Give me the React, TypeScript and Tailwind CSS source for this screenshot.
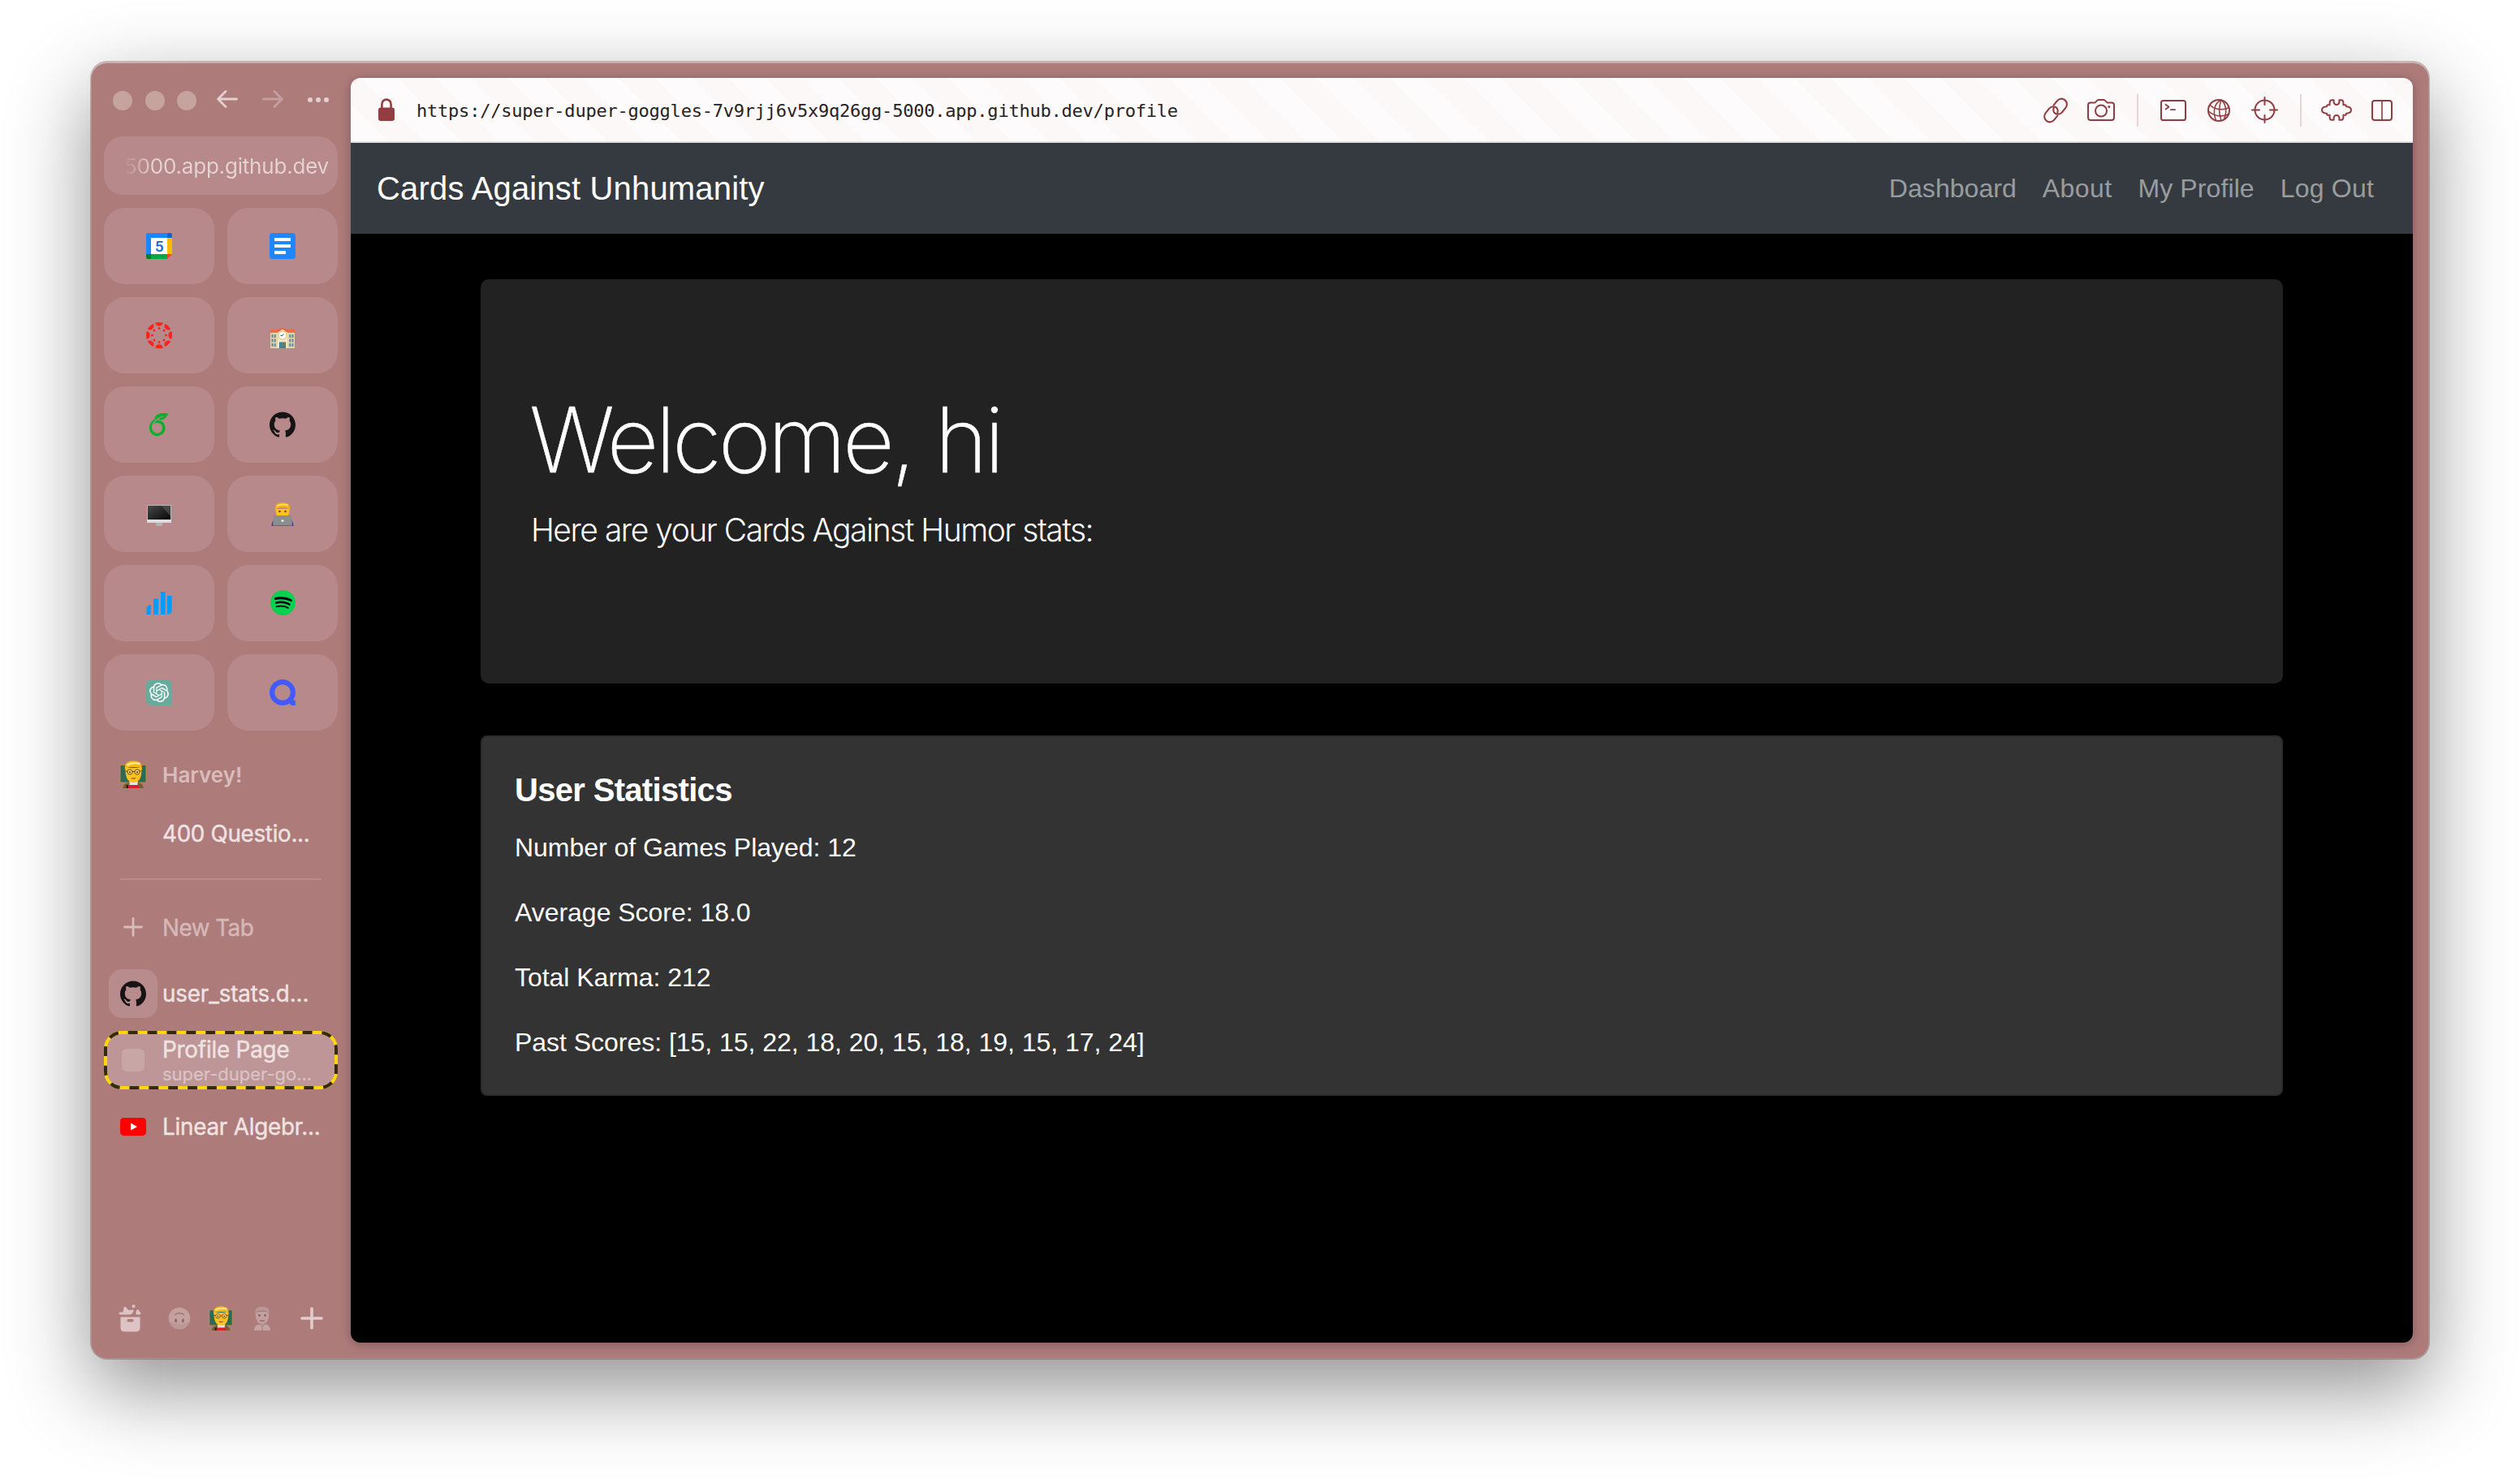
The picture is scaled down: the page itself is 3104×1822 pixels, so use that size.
import React from 'react';
import type { ReactNode } from 'react';
import { SiGithub, SiOpenai, SiOverleaf, SiSpotify } from 'react-icons/si';

/* ---------- Sidebar icons ---------- */

function CalendarIcon() {
  return (
    <div className="grid size-8 place-items-center">
      <svg className="col-start-1 row-start-1 size-8" viewBox="0 0 32 32">
        <path d="M2 0H26V6H6V26H0V2Q0 0 2 0Z" fill="#1e86fc" />
        <path d="M26 0H30Q32 0 32 2V6H26Z" fill="#0b67d6" />
        <path d="M26 6H32V26H26Z" fill="#fbba00" />
        <path d="M6 26H26V32H6Z" fill="#00a846" />
        <path d="M0 26H6V32H2Q0 32 0 30Z" fill="#00802d" />
        <path d="M26 26H32L26 32Z" fill="#fb3b2f" />
        <path d="M6 6H26V26H6Z" fill="#fff" />
      </svg>
      <span className="z-10 col-start-1 row-start-1 font-['Roboto'] text-[19px] leading-none font-medium text-[#1268d8]">5</span>
    </div>
  );
}

function DocsIcon() {
  return (
    <svg className="size-8" viewBox="0 0 32 32">
      <rect width="32" height="32" rx="3.5" fill="#2186fb" />
      <path d="M6 6H26V10H6ZM6 14H26V18H6ZM6 22H20V26H6Z" fill="#fff" />
    </svg>
  );
}

function CanvasIcon() {
  const turns = [0, 45, 90, 135, 180, 225, 270, 315];
  return (
    <svg className="size-8" viewBox="0 0 32 32" fill="#fb231c">
      {turns.map((a) => (
        <g key={a} transform={`rotate(${a} 16 16)`}>
          <path d="M11.2 0.6Q16 -0.6 20.8 0.6Q20 4.7 16 4.7Q12 4.7 11.2 0.6Z" />
          <circle cx="16" cy="7.5" r="1.5" />
        </g>
      ))}
    </svg>
  );
}

function SchoolIcon() {
  return (
    <svg className="mt-1.5 h-[27px] w-8" viewBox="0 0 32 27">
      <path d="M1 6H31V26H1Z" fill="#e3d6ac" />
      <path d="M0.5 2.8H31.5V6.8H0.5Z" fill="#ee6a48" />
      <path d="M10 5L16 1L22 5V26H10Z" fill="#f1e7c6" />
      <path d="M9 5.2L16 0.2L23 5.2L22 6.4L16 2.4L10 6.4Z" fill="#e85c3b" />
      <path d="M2.5 9h2v4h-2zM5.7 9h2v4h-2zM2.5 14.5h2v4h-2zM5.7 14.5h2v4h-2zM2.5 20h2v4h-2zM5.7 20h2v4h-2zM24.3 9h2v4h-2zM27.5 9h2v4h-2zM24.3 14.5h2v4h-2zM27.5 14.5h2v4h-2zM24.3 20h2v4h-2zM27.5 20h2v4h-2z" fill="#6389a0" />
      <circle cx="16" cy="10" r="5" fill="#fff" stroke="#d9bf55" strokeWidth="1" />
      <path d="M17.5 8.5L16 10.4H13.5" stroke="#444" strokeWidth="1" fill="none" />
      <path d="M12 18.5H20V26H12Z" fill="#2f6d8d" />
      <path d="M13.8 18.5v7.5M16 18.5v7.5M18.2 18.5v7.5" stroke="#b9a768" strokeWidth="0.7" />
    </svg>
  );
}

function MonitorIcon() {
  return (
    <svg className="mt-1 h-[27px] w-[30px]" viewBox="0 0 30 27">
      <defs>
        <linearGradient id="screen" x1="0" y1="0" x2="1" y2="1">
          <stop offset="0" stopColor="#4a4a4a" />
          <stop offset="1" stopColor="#050505" />
        </linearGradient>
      </defs>
      <path d="M0 0H30V18H0Z" fill="#b9b9b9" />
      <path d="M1 1H29V18H1Z" fill="url(#screen)" />
      <path d="M18 1H29V14Z" fill="#5b5b5b" opacity="0.6" />
      <path d="M0 18H30V21.5Q30 22 29.5 22H0.5Q0 22 0 21.5Z" fill="#dcdcde" />
      <path d="M11 22H19V26H11Z" fill="#b3b0b2" />
    </svg>
  );
}

function TechnologistIcon() {
  return (
    <svg className="h-[29px] w-7" viewBox="0 0 28 29">
      <path d="M0.5 29Q1 22 5 20H23Q27 22 27.5 29Z" fill="#2c3aa5" />
      <path d="M5.5 8Q5.5 20 14 20Q22.5 20 22.5 8Z" fill="#fdc31c" />
      <path d="M5 10Q3.5 0 14 0Q24.5 0 23 10Q21.5 6 14 6.4Q6.5 6 5 10Z" fill="#f5b40e" />
      <path d="M7 4.5Q12 1.2 21 3.5" stroke="#ffe072" strokeWidth="1.8" fill="none" />
      <circle cx="10.5" cy="11" r="1.2" fill="#5b3a1c" />
      <circle cx="17.5" cy="11" r="1.2" fill="#5b3a1c" />
      <path d="M3 16H25L26 28.6H2Z" fill="#8b8d8f" />
      <circle cx="14" cy="22.5" r="1.5" fill="#eee" />
    </svg>
  );
}

function BarsIcon() {
  return (
    <svg className="h-7 w-8" viewBox="0 0 32 28" fill="#069bff">
      <path d="M0.5 28V20Q1 16.5 6 16V28ZM9 8.5H15V28H9ZM18 0H23.5V28H18ZM26 5H31.7V23Q31.5 27.5 26 28Z" />
    </svg>
  );
}

function SpotifyIcon() {
  return (
    <div className="mb-0.5 grid size-8 place-items-center">
      <div className="col-start-1 row-start-1 size-7 rounded-full bg-black" />
      <SiSpotify className="z-10 col-start-1 row-start-1 size-[31px] text-[#0ad04f]" />
    </div>
  );
}

function ChatIcon() {
  return (
    <div className="grid size-8 place-items-center rounded-[7px] rounded-br-none bg-[#67ab9c]">
      <SiOpenai className="size-6 text-white" />
    </div>
  );
}

function QIcon() {
  return (
    <svg className="size-8" viewBox="0 0 32 32">
      <circle cx="16" cy="16" r="12.9" stroke="#425aff" strokeWidth="6.2" fill="none" />
      <path d="M22 27L28.5 25.5H31.8V32H27Z" fill="#425aff" />
    </svg>
  );
}

function TeacherIcon({ className }: { className: string }) {
  return (
    <svg className={className} viewBox="0 0 34 34">
      <path d="M0 4.5H34V28H0Z" fill="#b78453" />
      <path d="M1.5 6H32.5V26.5H1.5Z" fill="#2b6b55" />
      <path d="M4 34Q5 28 12 27H23Q29 28 30 34Z" fill="#75602f" />
      <path d="M12.5 25H22.5V31H12.5Z" fill="#e8e6ea" />
      <path d="M10 30H24V34H10Z" fill="#d8202a" />
      <path d="M8.5 30H11V34H8.5Z" fill="#35161a" />
      <path d="M7.5 9Q7 27 17.5 27Q28 27 27.5 9Z" fill="#fdc120" />
      <path d="M7 12Q5 0.3 17.5 0.3Q29 0.3 27.8 12Q26.5 7.5 17.5 8Q9 7.5 7 12Z" fill="#f6b816" />
      <path d="M9.5 6Q15 1.5 25.5 4" stroke="#ffe88c" strokeWidth="2.4" fill="none" />
      <circle cx="13" cy="14" r="3.1" fill="#fbd862" stroke="#5a3d12" strokeWidth="0.9" />
      <circle cx="22" cy="14" r="3.1" fill="#fbd862" stroke="#5a3d12" strokeWidth="0.9" />
      <path d="M16 13.5H19M7.8 13H10M25 13H27.2" stroke="#5a3d12" strokeWidth="0.9" />
      <circle cx="13" cy="14.3" r="1" fill="#3a2409" />
      <circle cx="22" cy="14.3" r="1" fill="#3a2409" />
      <path d="M15 21.5Q17.5 22.8 20 21.5" stroke="#8a5510" strokeWidth="1.3" fill="none" />
    </svg>
  );
}

function ArchiveIcon() {
  return (
    <svg className="h-[34px] w-7" viewBox="0 0 28 34" fill="#dec3c4">
      <path d="M2.5 15.5H26.5V28.5Q26.5 33.5 21.5 33.5H7.5Q2.5 33.5 2.5 28.5ZM12 18Q10.5 18 10.5 19.7T12 21.5H17Q18.5 21.5 18.5 19.7T17 18Z" fillRule="evenodd" />
      <path d="M2 12.5Q0 12 0.6 10.4Q1 9.4 3 9.6L5.6 9.4L6.4 4Q7.4 1.4 9.4 3.8L12.4 7L17.5 6.6Q19.4 7 18 9Q16.5 12.5 13.5 12.5Z" />
      <circle cx="18.5" cy="2.2" r="2" />
      <path d="M22.5 6.5Q23.6 5.4 24.6 7L27.4 10.6Q28 12.5 25.8 12.5H22.4Q20.8 12.4 21.2 11Z" />
    </svg>
  );
}

function UpsideDownIcon() {
  return (
    <svg className="size-7" viewBox="0 0 28 28">
      <circle cx="14" cy="14" r="13.3" fill="#c4a09f" />
      <path d="M1.5 18A13.3 13.3 0 0 0 26.5 18Q14 25 1.5 18Z" fill="#b08a8a" opacity="0.4" />
      <path d="M8.5 9.5Q14 5.8 19.5 9.5" stroke="#967070" strokeWidth="1.3" fill="none" strokeLinecap="round" />
      <ellipse cx="9.6" cy="17" rx="1.4" ry="2.4" fill="#8d6565" />
      <ellipse cx="18.4" cy="17" rx="1.4" ry="2.4" fill="#8d6565" />
    </svg>
  );
}

function ManIcon() {
  return (
    <svg className="h-[30px] w-[22px]" viewBox="0 0 22 30">
      <path d="M1 30Q1 23.5 7 22.5H15Q21 23.5 21 30Z" fill="#c5a2a2" />
      <path d="M7.5 22L11 25L14.5 22M11 25V30" stroke="#a57f80" strokeWidth="1" fill="none" />
      <path d="M2.5 7Q2.5 22 11 22Q19.5 22 19.5 7Z" fill="#c3a0a0" />
      <path d="M2 10Q0.5 0.3 11 0.3Q21.5 0.3 20 10Q18.5 5.5 11 6Q3.5 5.5 2 10Z" fill="#bd9797" stroke="#a47e7f" strokeWidth="0.8" />
      <circle cx="7.4" cy="11.5" r="1.3" fill="#7b5556" />
      <circle cx="14.6" cy="11.5" r="1.3" fill="#7b5556" />
      <path d="M8 17.5Q11 19.3 14 17.5" stroke="#8d6566" strokeWidth="1.2" fill="none" />
    </svg>
  );
}

function YouTubeIcon() {
  return (
    <svg className="h-[22px] w-8" viewBox="0 0 32 22">
      <rect width="32" height="22" rx="4.5" fill="#fd0000" />
      <path d="M13 6.5L21 11L13 15.5Z" fill="#fff" />
    </svg>
  );
}

/* ---------- Toolbar icons ---------- */

function ToolIcon({ className, viewBox, children }: { className: string; viewBox: string; children: ReactNode }) {
  return (
    <div className="flex w-14 justify-center">
      <svg className={className} viewBox={viewBox} fill="none" stroke="#923d41" strokeWidth="2" strokeLinecap="round" strokeLinejoin="round">
        {children}
      </svg>
    </div>
  );
}

/* ---------- Sidebar ---------- */

const pinned: ReactNode[] = [
  <CalendarIcon />,
  <DocsIcon />,
  <CanvasIcon />,
  <SchoolIcon />,
  <SiOverleaf className="size-7 text-[#0cae2c]" />,
  <SiGithub className="size-8 text-[#181416]" />,
  <MonitorIcon />,
  <TechnologistIcon />,
  <BarsIcon />,
  <SpotifyIcon />,
  <ChatIcon />,
  <QIcon />,
];

function Row({ icon, children }: { icon?: ReactNode; children: ReactNode }) {
  return (
    <div className="flex h-[72px] items-center">
      <div className="flex w-[72px] justify-center">{icon}</div>
      {children}
    </div>
  );
}

function Sidebar() {
  return (
    <aside className="flex w-[320px] shrink-0 flex-col px-4 font-['Inter',sans-serif] text-[27.8px] tracking-[-0.32px] text-[#f0e3e3]">
      <div className="flex h-[92px] items-center pl-[11px]">
        <div className="mt-1 flex gap-[15.5px]">
          <span className="size-6 rounded-full bg-[#c6a39f]" />
          <span className="size-6 rounded-full bg-[#c6a39f]" />
          <span className="size-6 rounded-full bg-[#c6a39f]" />
        </div>
        <svg className="ml-[25px] h-6 w-[26px]" viewBox="0 0 26 24" fill="none" stroke="#e5cfcf" strokeWidth="2.8" strokeLinecap="round" strokeLinejoin="round">
          <path d="M24.5 12H2M11 2.5L1.6 12L11 21.5" />
        </svg>
        <svg className="ml-[30px] h-6 w-[26px]" viewBox="0 0 26 24" fill="none" stroke="#c59f9f" strokeWidth="2.8" strokeLinecap="round" strokeLinejoin="round">
          <path d="M1.5 12H24M15 2.5L24.4 12L15 21.5" />
        </svg>
        <div className="mt-0.5 ml-[30px] flex gap-[4px]">
          <span className="size-1.5 rounded-full bg-[#e5cfcf]" />
          <span className="size-1.5 rounded-full bg-[#e5cfcf]" />
          <span className="size-1.5 rounded-full bg-[#e5cfcf]" />
        </div>
      </div>

      <div className="flex h-[72px] items-center justify-end rounded-[24px] bg-[#b7898a] pr-[11px]">
        <span className="bg-linear-to-r from-transparent to-[#e6d3d3] to-[14%] bg-clip-text text-[26px] font-normal tracking-[-0.2px] text-transparent">
          5000.app.github.dev
        </span>
      </div>

      <div className="mt-4 grid grid-cols-2 gap-4">
        {pinned.map((icon, i) => (
          <div key={i} className="flex h-[94px] items-center justify-center rounded-[26px] bg-[#b7898a]">
            {icon}
          </div>
        ))}
      </div>

      <div className="mt-[18px] mb-px">
        <Row icon={<TeacherIcon className="size-[34px]" />}>
          <span className="text-[26px] font-semibold tracking-normal text-[#d9bcbc]">Harvey!</span>
        </Row>
        <Row>
          <span className="pt-[3px] [-webkit-text-stroke:0.4px]">400 Questio...</span>
        </Row>
      </div>

      <div className="mx-5 mt-[19px] mb-[22px] h-0.5 bg-[#ba8c8c]" />

      <div className="flex flex-col gap-2.5">
        <Row
          icon={
            <svg className="size-6" viewBox="0 0 24 24" stroke="#d9bcbc" strokeWidth="2.8" strokeLinecap="round">
              <path d="M12 1.5V22.5M1.5 12H22.5" />
            </svg>
          }
        >
          <span className="pt-[3px] tracking-[-0.5px] text-[#d6b8b8] [-webkit-text-stroke:0.4px]">New Tab</span>
        </Row>
        <Row
          icon={
            <div className="flex size-[60px] items-center justify-center rounded-[16px] bg-[#b88b8c]">
              <SiGithub className="size-8 text-[#181416]" />
            </div>
          }
        >
          <span className="pt-[2px] tracking-[-0.15px] [-webkit-text-stroke:0.4px]">user_stats.d...</span>
        </Row>
        <div className="relative rounded-[22px] bg-[#be9697]">
          <Row icon={<div className="size-7 rounded-[6px] bg-[#c7a6a5]" />}>
            <div className="flex flex-col pt-0.5">
              <span className="leading-[32px] tracking-[-0.2px] [-webkit-text-stroke:0.4px]">Profile Page</span>
              <span className="text-[22px] leading-[28px] tracking-[-0.02px] text-[#dcc3c4] [-webkit-text-stroke:0.2px]">super-duper-go...</span>
            </div>
          </Row>
          <svg className="absolute inset-0 h-[72px] w-[288px]" viewBox="0 0 288 72" fill="none" strokeWidth="4">
            <rect x="2" y="2" width="284" height="68" rx="20" stroke="#ffd60a" />
            <rect x="2" y="2" width="284" height="68" rx="20" stroke="#332b0a" pathLength="672" strokeDasharray="12 12" strokeDashoffset="-7.7" />
          </svg>
        </div>
        <Row icon={<YouTubeIcon />}>
          <span className="pt-[2px] tracking-[-0.22px] [-webkit-text-stroke:0.4px]">Linear Algebr...</span>
        </Row>
      </div>

      <div className="mt-auto mb-[30px] flex h-10 items-center justify-between">
        <div className="flex w-16 justify-center">
          <ArchiveIcon />
        </div>
        <div className="flex">
          <div className="flex w-[51px] items-center justify-center">
            <UpsideDownIcon />
          </div>
          <div className="flex w-[51px] items-center justify-center">
            <TeacherIcon className="size-[30px]" />
          </div>
          <div className="flex w-[51px] items-center justify-center">
            <ManIcon />
          </div>
        </div>
        <div className="flex w-16 justify-center">
          <svg className="size-7" viewBox="0 0 28 28" stroke="#e3cbcc" strokeWidth="3.6" strokeLinecap="round">
            <path d="M14 2V26M2 14H26" />
          </svg>
        </div>
      </div>
    </aside>
  );
}

/* ---------- Browser toolbar ---------- */

function Toolbar() {
  return (
    <div className="flex h-20 shrink-0 items-center border-b-2 border-[#e2dfe0] bg-[repeating-linear-gradient(45deg,#fdfbfc_0,#fdfbfc_32px,#fcf8f7_32px,#fcf8f7_64px)] pr-[10px] pl-[34px]">
      <svg className="h-7 w-5" viewBox="0 0 20 28">
        <path d="M4.4 13V7.2a5.6 5.6 0 0 1 11.2 0V13" fill="none" stroke="#923d41" strokeWidth="2.6" />
        <rect y="11.5" width="20" height="16.5" rx="3" fill="#923d41" />
      </svg>
      <span className="ml-[27px] pt-[3px] font-['DejaVu_Sans_Mono',monospace] text-[22px] tracking-[-0.22px] whitespace-nowrap text-[#262324]">
        https://super-duper-goggles-7v9rjj6v5x9q26gg-5000.app.github.dev/profile
      </span>
      <div className="ml-auto flex items-center pt-px">
        <ToolIcon className="size-[34px]" viewBox="0 0 24 24">
          <g strokeWidth="1.45">
            <path d="M10.6 9.6a4.6 4.6 0 0 0 0 4.2a4.5 4.5 0 0 0 6.6.6l3.8-3.9a4.7 4.7 0 0 0-6.9-6.6l-3.2 3.3" transform="rotate(-6 12 12)" />
            <path d="M13.4 14.4a4.6 4.6 0 0 0 0-4.2a4.5 4.5 0 0 0-6.6-.6l-3.8 3.9a4.7 4.7 0 0 0 6.9 6.6l3.2-3.3" transform="rotate(-6 12 12)" />
          </g>
        </ToolIcon>
        <ToolIcon className="h-[27px] w-[34px]" viewBox="0 0 34 27">
          <path d="M4 4.4H9.5L12.4 1.6Q13 1 14 1H20Q21 1 21.6 1.6L24.5 4.4H30Q33 4.4 33 7.4V23Q33 26 30 26H4Q1 26 1 23V7.4Q1 4.4 4 4.4Z" />
          <circle cx="17" cy="14.5" r="7" />
          <circle cx="26.8" cy="9.4" r="0.8" fill="#923d41" strokeWidth="1.4" />
        </ToolIcon>
        <div className="mr-[15px] ml-4 h-10 w-0.5 bg-[#e9d5d7]" />
        <ToolIcon className="h-[26px] w-8" viewBox="0 0 32 26">
          <rect x="1" y="1" width="30" height="24" rx="2.6" />
          <path d="M6.5 5.8L10.5 8.8L6.5 11.6M13 12.2H18" strokeWidth="1.8" />
        </ToolIcon>
        <ToolIcon className="size-7" viewBox="0 0 28 28">
          <circle cx="14" cy="14" r="13" />
          <g strokeWidth="1.5">
            <path d="M17 1.2C8 5 6.5 16 10.5 26.5M17 1.2C14 9 14 18 17 26.6M17 1.2C24 7 24 18 20 25.5" />
            <path d="M3 7C8 13 19 14.5 26.5 10.5M1.2 14.8C8 21.5 19 22.5 26.5 18.5" />
          </g>
        </ToolIcon>
        <ToolIcon className="size-[33px]" viewBox="0 0 33 33">
          <circle cx="16.5" cy="16.5" r="12" />
          <path d="M16.5 1V10M16.5 23V32M1 16.5H10M23 16.5H32" />
        </ToolIcon>
        <div className="mr-[15px] ml-4 h-10 w-0.5 bg-[#e9d5d7]" />
        <ToolIcon className="h-[27px] w-[38px]" viewBox="0 0 38 27">
          <path d="M13 1.2H15.6V3.6A3.4 3.4 0 0 0 22.4 3.6V1.2H25Q27.4 1.6 27.4 4.6V7.2H30Q31 7.4 31 9.2C35 9.4 37 11 37 13.5C37 16 35 17.6 31 17.8Q31 19.6 30 19.8H27.4V22.4Q27.4 25.4 25 25.8H22.4V23.4A3.4 3.4 0 0 0 15.6 23.4V25.8H13Q10.6 25.4 10.6 22.4V19.8H8Q7 19.6 7 17.8C3 17.6 1 16 1 13.5C1 11 3 9.4 7 9.2Q7 7.4 8 7.2H10.6V4.6Q10.6 1.6 13 1.2Z" />
        </ToolIcon>
        <ToolIcon className="h-[26px] w-[26px]" viewBox="0 0 26 26">
          <rect x="1" y="1" width="24" height="24" rx="3" />
          <path d="M13 1V25" strokeWidth="1.6" />
        </ToolIcon>
      </div>
    </div>
  );
}

/* ---------- Page ---------- */

const navLinks = [
  { label: 'Dashboard', tracking: 'tracking-[0.05px]' },
  { label: 'About', tracking: 'tracking-[0.4px]' },
  { label: 'My Profile', tracking: 'tracking-[0.1px]' },
  { label: 'Log Out', tracking: 'tracking-[0.2px]' },
];

const stats = [
  'Number of Games Played: 12',
  'Average Score: 18.0',
  'Total Karma: 212',
  'Past Scores: [15, 15, 22, 18, 20, 15, 18, 19, 15, 17, 24]',
];

function Page() {
  return (
    <div className="flex-1 bg-black font-['Liberation_Sans',sans-serif] text-white">
      <nav className="flex h-28 items-center justify-between bg-[#343a40] px-8">
        <span className="text-[40px] tracking-[0.17px]">Cards Against Unhumanity</span>
        <div className="flex text-[32px] text-white/50">
          {navLinks.map(({ label, tracking }) => (
            <span key={label} className={`px-4 ${tracking}`}>
              {label}
            </span>
          ))}
        </div>
      </nav>
      <main className="mx-auto mt-14 w-[2220px]">
        <section className="h-[498px] rounded-[10px] bg-[#222222] pt-[131px] pr-16 pl-[62px] font-['Inter',sans-serif]">
          <h1 className="-ml-0.5 text-[111px] leading-[134px] font-extralight tracking-[-4.1px] [-webkit-text-stroke:0.5px]">Welcome, hi</h1>
          <p className="mt-[14px] text-[39px] leading-[60px] font-light tracking-[-1.5px]">
            Here are your Cards Against Humor stats:
          </p>
        </section>
        <section className="mt-16 h-[444px] rounded-[8px] border-2 border-[#2c2c2c] bg-[#333333] p-10">
          <h5 className="pt-px text-[40px] leading-[48px] font-bold tracking-[-0.68px]">User Statistics</h5>
          <div className="mt-[23px] flex flex-col gap-8 text-[32px] leading-[48px] tracking-[-0.03px]">
            {stats.map((line) => (
              <p key={line}>{line}</p>
            ))}
          </div>
        </section>
      </main>
    </div>
  );
}

export default function App() {
  return (
    <div className="h-[1822px] w-[3104px] overflow-hidden bg-white pt-[76px] pl-[112px]">
      <div className="flex h-[1598px] w-[2880px] rounded-[20px] bg-[#ae7b7b] pr-5 shadow-[inset_0_2px_0_rgba(255,255,255,0.35),inset_0_0_0_1px_rgba(255,255,255,0.15),0_0_0_1px_rgba(0,0,0,0.22),0_36px_100px_rgba(0,0,0,0.44)]">
        <Sidebar />
        <div className="mt-5 mb-5 flex flex-1 flex-col overflow-hidden rounded-[12px] shadow-[0_2px_14px_rgba(0,0,0,0.25)]">
          <Toolbar />
          <Page />
        </div>
      </div>
    </div>
  );
}
